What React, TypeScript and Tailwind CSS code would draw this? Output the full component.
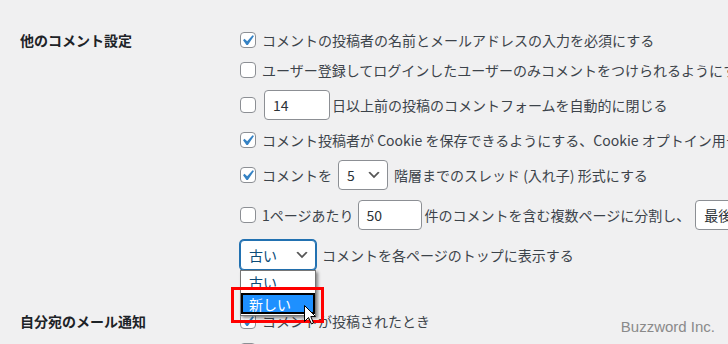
const jp = "font-['Noto_Sans_CJK_JP','Noto_Sans',sans-serif]";

function Box({ on }: { on?: boolean }) {
  return (
    <span className="flex h-4 w-4 shrink-0 rounded-[4px] border border-[#8c8f94] bg-white">
      {on && (
        <svg viewBox="3.81 2.86 13.33 13.33" className="h-[14px] w-[14px]">
          <path d="M14.83 4.89l1.34.94-5.81 8.38H9.02L5.78 9.67l1.34-1.25 2.57 2.4z" fill="#3582c4" />
        </svg>
      )}
    </span>
  );
}

function Chevron() {
  return (
    <svg viewBox="0 0 20 20" className="h-4 w-4 shrink-0">
      <path d="M5 6l5 5 5-5 2 1-7 7-7-7 2-1z" fill="#555" />
    </svg>
  );
}

function Field({ value, w, className = '' }: { value: string; w: string; className?: string }) {
  return (
    <span className={`flex h-[30px] shrink-0 items-center rounded-[4px] border border-[#8c8f94] bg-white pl-2 text-[#2c3338] ${w} ${className}`}>
      {value}
    </span>
  );
}

function Select({ value, w, className = '', focus }: { value: string; w: string; className?: string; focus?: boolean }) {
  return (
    <span
      className={`flex h-[30px] shrink-0 items-center justify-between rounded-[4px] border bg-white pl-2 pr-[5px] ${w} ${className} ${
        focus ? 'border-[#2271b1] text-[#0a4b78] shadow-[0_0_0_1px_#2271b1]' : 'border-[#8c8f94] text-[#2c3338]'
      }`}
    >
      <span>{value}</span>
      <Chevron />
    </span>
  );
}

function Row({ h, children }: { h: string; children: React.ReactNode }) {
  return <div className={`flex items-center whitespace-nowrap ${h}`}>{children}</div>;
}

export default function App() {
  return (
    <div className={`relative h-[344px] w-[728px] overflow-hidden bg-[#f0f0f1] text-[14px] leading-[20px] text-[#3c434a] ${jp}`}>
      {/* 他のコメント設定 */}
      <div className="grid grid-cols-[240px_1fr] pt-[25px]">
        <div className="flex h-[30px] items-center pl-5 font-bold text-[#1d2327]">他のコメント設定</div>
        <div className="flex flex-col">
          <Row h="h-[30px]">
            <Box on />
            <span className="ml-[6px]">コメントの投稿者の名前とメールアドレスの入力を必須にする</span>
          </Row>
          <Row h="h-[30px]">
            <Box />
            <span className="ml-[6px]">ユーザー登録してログインしたユーザーのみコメントをつけられるようにする</span>
          </Row>
          <Row h="h-[40px]">
            <Box />
            <Field value="14" w="w-[66px]" className="ml-[8px]" />
            <span className="ml-[2px]">日以上前の投稿のコメントフォームを自動的に閉じる</span>
          </Row>
          <Row h="h-[30px]">
            <Box on />
            <span className="ml-[6px]">
              コメント投稿者が Cookie を保存できるようにする、Cookie オプトイン用チェックボックスを表示します。
            </span>
          </Row>
          <Row h="h-[40px]">
            <Box on />
            <span className="ml-[6px]">コメントを</span>
            <Select value="5" w="w-[50px]" className="ml-[6px]" />
            <span className="ml-[6px]">階層までのスレッド (入れ子) 形式にする</span>
          </Row>
          <Row h="h-[40px]">
            <Box />
            <span className="ml-[6px]">1ページあたり</span>
            <Field value="50" w="w-[64px]" className="ml-[4px]" />
            <span className="ml-[3px]">件のコメントを含む複数ページに分割し、</span>
            <Select value="最後" w="w-[90px]" className="ml-[5px]" />
          </Row>
          <Row h="h-[40px]">
            <Select value="古い" w="w-[76px]" focus />
            <span className="ml-[6px]">コメントを各ページのトップに表示する</span>
          </Row>
        </div>
      </div>

      {/* 自分宛のメール通知 */}
      <div className="mt-[31px] grid grid-cols-[240px_1fr]">
        <div className="flex h-[30px] items-center pl-5 font-bold text-[#1d2327]">自分宛のメール通知</div>
        <div className="flex flex-col">
          <Row h="h-[30px]">
            <Box on />
            <span className="ml-[6px]">コメントが投稿されたとき</span>
          </Row>
          <Row h="h-[30px]">
            <Box on />
            <span className="ml-[6px]">コメントがモデレーションを保留しているとき</span>
          </Row>
        </div>
      </div>

      {/* open select list */}
      <div className="absolute left-[240px] top-[270px] flex w-[76px] flex-col border border-[#767676] bg-white pb-[1px] text-[#0a4b78] shadow-[2px_2px_3px_rgba(0,0,0,0.45)]">
        <div className="flex h-[22px] items-center pl-2">古い</div>
        <div className="flex h-[21px] items-center border-2 border-black bg-[#1e90ff] pl-[6px] text-white">新しい</div>
      </div>

      {/* highlight frame */}
      <div className="absolute left-[231px] top-[287px] h-[36px] w-[93px] border-[3px] border-[#ff0000]" />

      {/* mouse pointer */}
      <svg className="absolute left-[304px] top-[305px]" width="13" height="20" viewBox="0 0 13 20">
        <path d="M0.5 0.5 L0.5 16.5 L4.5 12.5 L7.5 19 L9.5 18 L6.8 11.5 L11.5 11.5 Z" fill="#fff" stroke="#000" strokeWidth="1" strokeLinejoin="miter" />
      </svg>

      <div className="absolute right-[13px] top-[317px] font-['Liberation_Sans',sans-serif] text-[15px] text-[#8a8a8a]">
        Buzzword Inc.
      </div>
    </div>
  );
}
